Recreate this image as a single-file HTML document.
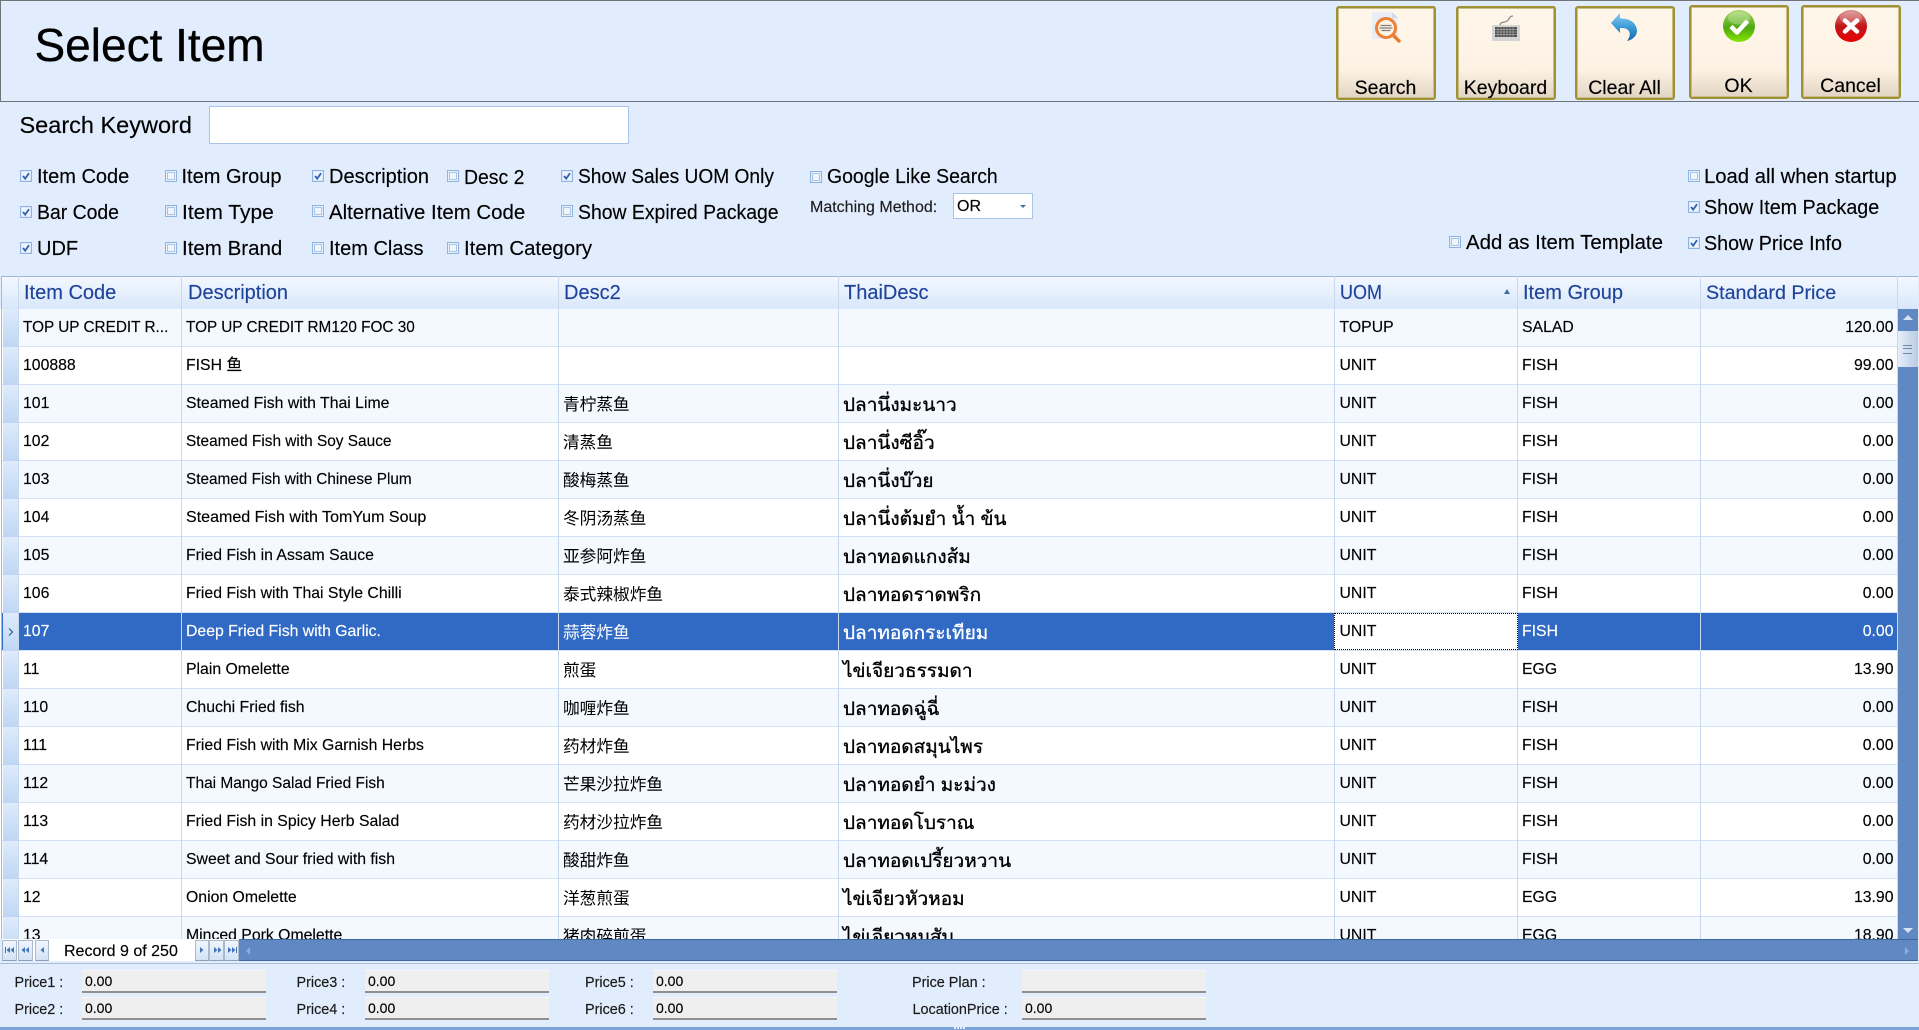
<!DOCTYPE html>
<html lang="en"><head><meta charset="utf-8"><title>Select Item</title>
<style>
html,body{margin:0;padding:0;width:1919px;height:1030px;overflow:hidden;background:#e1edfd}
body{position:relative;font-family:"Liberation Sans","Noto Sans CJK SC",sans-serif;color:#000;-webkit-text-stroke:.15px currentColor}
.t{position:absolute;white-space:nowrap;transform-origin:0 50%}
.l{font-size:20px;line-height:24px}
.ck{position:absolute;width:12px;height:12px}
.btn{position:absolute;box-sizing:border-box;width:100px;border:2px solid #a09234;border-radius:3px;background:linear-gradient(#fff6ea 0,#fdf2e4 68%,#e2d5c3 100%);box-shadow:0 0 0 1px #c8c08a inset}
.btn span{position:absolute;left:-1px;right:0;text-align:center;font-size:19.5px;line-height:24px;bottom:-2px}
.abs{position:absolute}
.hd{position:absolute;left:2px;top:276px;width:1916px;height:32px;background:linear-gradient(#f3f8ff,#d8e7fa);border-top:1px solid #9db5d3;border-bottom:1px solid #a5c0e2;box-sizing:content-box}
.hd b{position:absolute;top:0;font-weight:normal;font-size:20px;line-height:32px;color:#1f439b;white-space:nowrap;transform-origin:0 50%}
.vl{position:absolute;width:1px;top:276px;height:663px;background:#c8d9ee;z-index:3}
.body{position:absolute;left:0;top:309px;width:1898px;height:630px;overflow:hidden;background:#fff}
.r{position:absolute;left:2px;width:1896px;height:37px;border-bottom:1px solid #d2e1f3;background:#fff;font-size:15.8px;line-height:37px}
.r.o{background:#f4f8ff}
.r i{position:absolute;font-style:normal;white-space:nowrap;top:0}
.r:before{content:"";position:absolute;left:1px;top:0;width:15px;height:38px;background:linear-gradient(#dfebfb,#bed6f4)}
.a{left:21px}.b{left:184px}.r i.c{left:561px;font-size:16.7px;top:1px;-webkit-text-stroke:0}.r i.d{left:841px;font-size:19px;top:1.500px;-webkit-text-stroke:.35px currentColor}.e{left:1337.5px}.f{left:1520px}.g{right:4.500px}
.r.s{background:#316ac5;color:#fff;border-bottom:1px solid #d2e1f3}
.uc{position:absolute;left:1332px;top:0;width:182px;height:35px;background:#fff;border:1px dotted #000;color:#000;z-index:5}
.fld{position:absolute;box-sizing:border-box;width:184px;height:23px;background:#efefef;border-bottom:2px solid #8f8f8f;border-top:1px solid #f7f7f7;font-size:14px;line-height:20px;padding-left:3px}
.pl{position:absolute;font-size:14.4px;line-height:18px;color:#1a1a1a;white-space:nowrap}
.nb{position:absolute;top:940px;height:21px;box-sizing:border-box;border:1px solid #aab9cc;border-bottom:1px solid #8c9fb8;background:linear-gradient(#f0f6ff,#d3e2f6)}
</style></head><body>

<svg width="0" height="0" style="position:absolute"><defs>
<symbol id="u" viewBox="0 0 12 12"><rect x=".5" y=".5" width="11" height="11" fill="#e6effc" stroke="#8fb4e3"/><rect x="2.500" y="2.500" width="7" height="7" fill="#eef4fc" stroke="#aec5e2"/></symbol>
<symbol id="k" viewBox="0 0 12 12"><rect x=".5" y=".5" width="11" height="11" fill="#dce8f8" stroke="#8fb4e3"/><rect x="2" y="2" width="8" height="8" fill="#eef4fb"/><path d="M3 6l2.200 2.600L9 3.200" fill="none" stroke="#2f63b0" stroke-width="1.800"/></symbol>
<linearGradient id="gG" x1="0" y1="0" x2="0" y2="1"><stop offset="0" stop-color="#a9d96a"/><stop offset=".55" stop-color="#4fa810"/><stop offset="1" stop-color="#86e400"/></linearGradient>
<linearGradient id="gR" x1="0" y1="0" x2="0" y2="1"><stop offset="0" stop-color="#d88f8f"/><stop offset=".5" stop-color="#c01818"/><stop offset="1" stop-color="#e80000"/></linearGradient>
<linearGradient id="gB" x1="0" y1="0" x2="0" y2="1"><stop offset="0" stop-color="#8ccdf0"/><stop offset=".5" stop-color="#3b9bd8"/><stop offset="1" stop-color="#1668a8"/></linearGradient>
</defs></svg>

<!-- header -->
<div class="abs" style="left:0;top:0;width:1919px;height:102px;box-sizing:border-box;border-top:1px solid #6f7479;border-left:1px solid #6f7479;border-bottom:1px solid #6f7479"></div>
<div class="t" style="left:34.500px;top:17px;font-size:46px;line-height:56px;-webkit-text-stroke:.3px #000">Select Item</div>

<div class="btn" style="left:1336px;top:6px;height:94px"><span>Search</span></div>
<div class="btn" style="left:1456px;top:6px;height:94px"><span>Keyboard</span></div>
<div class="btn" style="left:1575px;top:6px;height:94px"><span>Clear All</span></div>
<div class="btn" style="left:1689px;top:5px;height:94px"><span style="bottom:-1px">OK</span></div>
<div class="btn" style="left:1801px;top:5px;height:94px"><span style="bottom:-1px">Cancel</span></div>

<svg class="abs" style="left:1372px;top:12px" width="30" height="31" viewBox="0 0 30 31">
<path d="M0 0H20L26 6V27H0Z" fill="#e9edf5"/><path d="M20 0V6H26Z" fill="#d3d9e5"/>
<path d="M21 23L27 29" stroke="#ee7a28" stroke-width="3.400" stroke-linecap="round"/>
<circle cx="14" cy="16" r="9.500" fill="#fff3e4" stroke="#ee8136" stroke-width="3"/>
<path d="M8.500 13.500h11M7.500 16h13M9.500 18.500h9" stroke="#7d7d7d" stroke-width="1.300"/></svg>

<svg class="abs" style="left:1492px;top:15px" width="28" height="27" viewBox="0 0 28 27">
<path d="M8 11C8 6 12 8 15 6S17 1 21 1" fill="none" stroke="#8b8b8b" stroke-width="1.300"/>
<rect x="0" y="10" width="28" height="16" rx="1" fill="#d4d4d4"/><rect x="3" y="12" width="22" height="10" fill="#4e4e4e"/>
<path d="M3 14.500h22M3 17h22M3 19.500h22" stroke="#a8a8a8" stroke-width=".7"/>
<path d="M6 12v10M9 12v10M12 12v10M15 12v10M18 12v10M21 12v10" stroke="#a8a8a8" stroke-width=".7"/></svg>

<svg class="abs" style="left:1611px;top:13px" width="27" height="29" viewBox="0 0 27 29">
<path d="M0 10L9 0V5.500C20 5 26 11 26 18C26 23 21 27 16 28C19 24 20 20 17 17C15 15 12 15 9 15V20Z" fill="url(#gB)"/></svg>

<svg class="abs" style="left:1723px;top:10px" width="32" height="32" viewBox="0 0 32 32">
<ellipse cx="16" cy="16" rx="16" ry="16" fill="url(#gG)"/><ellipse cx="16" cy="8" rx="11" ry="6.500" fill="#fff" opacity=".25"/>
<path d="M8 16.500l6 6L24.500 11" fill="none" stroke="#fff" stroke-width="4.500" stroke-linejoin="round"/></svg>

<svg class="abs" style="left:1835px;top:10px" width="32" height="32" viewBox="0 0 32 32">
<ellipse cx="16" cy="16" rx="16" ry="16" fill="url(#gR)"/><ellipse cx="16" cy="8" rx="11" ry="6.500" fill="#fff" opacity=".2"/>
<path d="M10 10.500l12 11M22 10.500l-12 11" fill="none" stroke="#fff" stroke-width="4.500" stroke-linecap="round"/></svg>

<!-- search row -->
<div class="t" style="left:19.500px;top:110px;font-size:23.500px;line-height:30px">Search Keyword</div>
<div class="abs" style="left:209px;top:106px;width:420px;height:38px;box-sizing:border-box;background:#fff;border:1px solid #a9c4e6"></div>

<!-- checkboxes -->
<svg class="ck" style="left:20px;top:170px"><use href="#k"/></svg><div class="t l" style="left:37px;top:164.500px">Item Code</div>
<svg class="ck" style="left:165px;top:170px"><use href="#u"/></svg><div class="t l" style="left:181.500px;top:164.500px">Item Group</div>
<svg class="ck" style="left:312px;top:170px"><use href="#k"/></svg><div class="t l" style="left:329px;top:164.500px">Description</div>
<svg class="ck" style="left:447px;top:170px"><use href="#u"/></svg><div class="t l" style="left:464px;top:165.500px;transform:scaleX(.97)">Desc 2</div>
<svg class="ck" style="left:561px;top:170px"><use href="#k"/></svg><div class="t l" style="left:578px;top:164.500px;transform:scaleX(.958)">Show Sales UOM Only</div>
<svg class="ck" style="left:810px;top:171px"><use href="#u"/></svg><div class="t l" style="left:827px;top:165px;transform:scaleX(.972)">Google Like Search</div>

<svg class="ck" style="left:20px;top:206px"><use href="#k"/></svg><div class="t l" style="left:37px;top:201px;transform:scaleX(.97)">Bar Code</div>
<svg class="ck" style="left:165px;top:205px"><use href="#u"/></svg><div class="t l" style="left:181.500px;top:200.500px;transform:scaleX(1.05)">Item Type</div>
<svg class="ck" style="left:312px;top:205px"><use href="#u"/></svg><div class="t l" style="left:329px;top:200.500px;transform:scaleX(1.02)">Alternative Item Code</div>
<svg class="ck" style="left:561px;top:205px"><use href="#u"/></svg><div class="t l" style="left:578px;top:201px;transform:scaleX(.97)">Show Expired Package</div>

<svg class="ck" style="left:20px;top:242px"><use href="#k"/></svg><div class="t l" style="left:37px;top:237px">UDF</div>
<svg class="ck" style="left:165px;top:242px"><use href="#u"/></svg><div class="t l" style="left:181.500px;top:237px;transform:scaleX(1.025)">Item Brand</div>
<svg class="ck" style="left:312px;top:242px"><use href="#u"/></svg><div class="t l" style="left:329px;top:237px">Item Class</div>
<svg class="ck" style="left:447px;top:242px"><use href="#u"/></svg><div class="t l" style="left:464px;top:237px;transform:scaleX(1.02)">Item Category</div>

<div class="t" style="left:810px;top:197.500px;font-size:16px;line-height:20px;color:#1c1c1c">Matching Method:</div>
<div class="abs" style="left:953px;top:193px;width:80px;height:26px;box-sizing:border-box;background:#fff;border:1px solid #a9c4e6;font-size:16px;line-height:25px;padding-left:3px">OR</div>
<div class="abs" style="left:1020px;top:205px;width:0;height:0;border-left:3px solid transparent;border-right:3px solid transparent;border-top:3px solid #4a6f9f"></div>

<svg class="ck" style="left:1688px;top:170px"><use href="#u"/></svg><div class="t l" style="left:1704px;top:164.500px;transform:scaleX(1.013)">Load all when startup</div>
<svg class="ck" style="left:1688px;top:201px"><use href="#k"/></svg><div class="t l" style="left:1704px;top:195.500px;transform:scaleX(.985)">Show Item Package</div>
<svg class="ck" style="left:1688px;top:237px"><use href="#k"/></svg><div class="t l" style="left:1704px;top:231.500px;transform:scaleX(.985)">Show Price Info</div>
<svg class="ck" style="left:1449px;top:236px"><use href="#u"/></svg><div class="t l" style="left:1466px;top:230.500px;transform:scaleX(1.02)">Add as Item Template</div>

<!-- grid header -->
<div class="hd">
<b style="left:22px">Item Code</b><b style="left:186px">Description</b><b style="left:562px">Desc2</b><b style="left:842px">ThaiDesc</b><b style="left:1338px;transform:scaleX(.9)">UOM</b><b style="left:1521px">Item Group</b><b style="left:1704px;font-size:19.700px">Standard Price</b>
</div>
<div class="abs" style="left:1504px;top:289px;width:0;height:0;border-left:3px solid transparent;border-right:3px solid transparent;border-bottom:5px solid #3d6cab;z-index:4"></div>

<!-- grid body -->
<div class="body">
<div class="r o" style="top:0"><i class="a" style="transform:scaleX(.97);transform-origin:0 0">TOP UP CREDIT R...</i><i class="b" style="transform:scaleX(.97);transform-origin:0 0">TOP UP CREDIT RM120 FOC 30</i><i class="e">TOPUP</i><i class="f">SALAD</i><i class="g">120.00</i></div>
<div class="r" style="top:38px"><i class="a">100888</i><i class="b">FISH 鱼</i><i class="e">UNIT</i><i class="f">FISH</i><i class="g">99.00</i></div>
<div class="r o" style="top:76px"><i class="a">101</i><i class="b">Steamed Fish with Thai Lime</i><i class="c">青柠蒸鱼</i><i class="d">ปลานึ่งมะนาว</i><i class="e">UNIT</i><i class="f">FISH</i><i class="g">0.00</i></div>
<div class="r" style="top:114px"><i class="a">102</i><i class="b" style="transform:scaleX(.975);transform-origin:0 0">Steamed Fish with Soy Sauce</i><i class="c">清蒸鱼</i><i class="d">ปลานึ่งซีอิ๊ว</i><i class="e">UNIT</i><i class="f">FISH</i><i class="g">0.00</i></div>
<div class="r o" style="top:152px"><i class="a">103</i><i class="b" style="transform:scaleX(.97);transform-origin:0 0">Steamed Fish with Chinese Plum</i><i class="c">酸梅蒸鱼</i><i class="d">ปลานึ่งบ๊วย</i><i class="e">UNIT</i><i class="f">FISH</i><i class="g">0.00</i></div>
<div class="r" style="top:190px"><i class="a">104</i><i class="b" style="transform:scaleX(1.015);transform-origin:0 0">Steamed Fish with TomYum Soup</i><i class="c">冬阴汤蒸鱼</i><i class="d">ปลานึ่งต้มยำ น้ำ ข้น</i><i class="e">UNIT</i><i class="f">FISH</i><i class="g">0.00</i></div>
<div class="r o" style="top:228px"><i class="a">105</i><i class="b">Fried Fish in Assam Sauce</i><i class="c">亚参阿炸鱼</i><i class="d">ปลาทอดแกงส้ม</i><i class="e">UNIT</i><i class="f">FISH</i><i class="g">0.00</i></div>
<div class="r" style="top:266px"><i class="a">106</i><i class="b">Fried Fish with Thai Style Chilli</i><i class="c">泰式辣椒炸鱼</i><i class="d">ปลาทอดราดพริก</i><i class="e">UNIT</i><i class="f">FISH</i><i class="g">0.00</i></div>
<div class="r s" style="top:304px"><i class="a">107</i><i class="b">Deep Fried Fish with Garlic.</i><i class="c">蒜蓉炸鱼</i><i class="d">ปลาทอดกระเทียม</i><div class="uc"><i style="left:4.500px;line-height:35px">UNIT</i></div><i class="f">FISH</i><i class="g">0.00</i></div>
<div class="r" style="top:342px"><i class="a">11</i><i class="b">Plain Omelette</i><i class="c">煎蛋</i><i class="d">ไข่เจียวธรรมดา</i><i class="e">UNIT</i><i class="f">EGG</i><i class="g">13.90</i></div>
<div class="r o" style="top:380px"><i class="a">110</i><i class="b">Chuchi Fried fish</i><i class="c">咖喱炸鱼</i><i class="d">ปลาทอดฉู่ฉี่</i><i class="e">UNIT</i><i class="f">FISH</i><i class="g">0.00</i></div>
<div class="r" style="top:418px"><i class="a">111</i><i class="b">Fried Fish with Mix Garnish Herbs</i><i class="c">药材炸鱼</i><i class="d">ปลาทอดสมุนไพร</i><i class="e">UNIT</i><i class="f">FISH</i><i class="g">0.00</i></div>
<div class="r o" style="top:456px"><i class="a">112</i><i class="b" style="transform:scaleX(.98);transform-origin:0 0">Thai Mango Salad Fried Fish</i><i class="c">芒果沙拉炸鱼</i><i class="d">ปลาทอดยำ มะม่วง</i><i class="e">UNIT</i><i class="f">FISH</i><i class="g">0.00</i></div>
<div class="r" style="top:494px"><i class="a">113</i><i class="b">Fried Fish in Spicy Herb Salad</i><i class="c">药材沙拉炸鱼</i><i class="d">ปลาทอดโบราณ</i><i class="e">UNIT</i><i class="f">FISH</i><i class="g">0.00</i></div>
<div class="r o" style="top:532px"><i class="a">114</i><i class="b">Sweet and Sour fried with fish</i><i class="c">酸甜炸鱼</i><i class="d">ปลาทอดเปรี้ยวหวาน</i><i class="e">UNIT</i><i class="f">FISH</i><i class="g">0.00</i></div>
<div class="r" style="top:570px"><i class="a">12</i><i class="b">Onion Omelette</i><i class="c">洋葱煎蛋</i><i class="d">ไข่เจียวหัวหอม</i><i class="e">UNIT</i><i class="f">EGG</i><i class="g">13.90</i></div>
<div class="r o" style="top:608px"><i class="a">13</i><i class="b">Minced Pork Omelette</i><i class="c">猪肉碎煎蛋</i><i class="d">ไข่เจียวหมูสับ</i><i class="e">UNIT</i><i class="f">EGG</i><i class="g">18.90</i></div>
</div>

<div class="vl" style="left:18px"></div><div class="vl" style="left:181px"></div><div class="vl" style="left:558px"></div><div class="vl" style="left:838px"></div><div class="vl" style="left:1334px"></div><div class="vl" style="left:1517px"></div><div class="vl" style="left:1700px"></div><div class="vl" style="left:1897px"></div>
<div class="abs" style="left:1px;top:276px;width:1px;height:663px;background:#a4bbd7"></div>

<!-- selected row arrow -->
<svg class="abs" style="left:8px;top:628px;z-index:4" width="6" height="8" viewBox="0 0 6 8"><path d="M1 .5L4.500 4L1 7.500" fill="none" stroke="#2f5d9b" stroke-width="1.200"/></svg>

<!-- vertical scrollbar -->
<div class="abs" style="left:1898px;top:309px;width:20px;height:630px;background:#6088c3;z-index:2"></div>
<div class="abs" style="left:1903px;top:315px;width:0;height:0;border-left:5px solid transparent;border-right:5px solid transparent;border-bottom:5px solid #d7e4f5;z-index:3"></div>
<div class="abs" style="left:1898px;top:331px;width:20px;height:36px;background:linear-gradient(90deg,#e6eef9,#b9cbe4);z-index:3"></div>
<div class="abs" style="left:1903px;top:345px;width:9px;height:7px;border-top:1px solid #6d87aa;border-bottom:1px solid #6d87aa;z-index:4"></div>
<div class="abs" style="left:1903px;top:348px;width:9px;height:1px;background:#6d87aa;z-index:4"></div>
<div class="abs" style="left:1903px;top:928px;width:0;height:0;border-left:5px solid transparent;border-right:5px solid transparent;border-top:5px solid #d7e4f5;z-index:3"></div>

<!-- navigator / hscroll -->
<div class="abs" style="left:239px;top:939px;width:1679px;height:22px;box-sizing:border-box;background:#6088c3;border-top:1px solid #3c689f;border-bottom:1px solid #3c689f;z-index:4"></div>
<div class="abs" style="left:246px;top:947px;width:0;height:0;border-top:4px solid transparent;border-bottom:4px solid transparent;border-right:4px solid #8fadd8;z-index:5"></div>
<div class="abs" style="left:1905px;top:947px;width:0;height:0;border-top:4px solid transparent;border-bottom:4px solid transparent;border-left:4px solid #8fadd8;z-index:5"></div>
<div class="abs" style="left:2px;top:939px;width:237px;height:22px;background:#fff;z-index:4"></div>
<div class="nb" style="left:2px;width:15px;z-index:5"></div><div class="nb" style="left:18px;width:15px;z-index:5"></div><div class="nb" style="left:35px;width:14px;z-index:5"></div>
<div class="nb" style="left:195px;width:14px;z-index:5"></div><div class="nb" style="left:209px;width:15px;z-index:5"></div><div class="nb" style="left:224px;width:15px;z-index:5"></div>
<svg class="abs" style="left:0;top:939px;z-index:6" width="240" height="22" viewBox="0 0 240 22" fill="#4174b8">
<path d="M5 8h1v6H5zM10 8v6L6.500 11zM14 8v6L10.500 11z"/><path d="M25 8v6L21.500 11zM29 8v6L25.500 11z"/><path d="M44 8v6L40.500 11z"/>
<path d="M200 8v6L203.500 11z"/><path d="M214 8v6L217.500 11zM218 8v6L221.500 11z"/><path d="M228 8v6L231.500 11zM232 8v6L235.500 11zM236 8h1v6h-1z"/></svg>
<div class="t" style="left:64px;top:942px;font-size:16px;line-height:20px;z-index:6">Record 9 of 250</div>

<!-- footer -->
<div class="abs" style="left:0;top:963px;width:1919px;height:1px;background:#a9bfd9"></div>

<div class="pl" style="left:14.500px;top:974px">Price1 :</div><div class="fld" style="left:82px;top:970px">0.00</div>
<div class="pl" style="left:14.500px;top:1001px">Price2 :</div><div class="fld" style="left:82px;top:997px;line-height:21px">0.00</div>
<div class="pl" style="left:296.500px;top:974px">Price3 :</div><div class="fld" style="left:365px;top:970px">0.00</div>
<div class="pl" style="left:296.500px;top:1001px">Price4 :</div><div class="fld" style="left:365px;top:997px;line-height:21px">0.00</div>
<div class="pl" style="left:585px;top:974px">Price5 :</div><div class="fld" style="left:653px;top:970px">0.00</div>
<div class="pl" style="left:585px;top:1001px">Price6 :</div><div class="fld" style="left:653px;top:997px;line-height:21px">0.00</div>
<div class="pl" style="left:912px;top:974px">Price Plan :</div><div class="fld" style="left:1022px;top:970px"></div>
<div class="pl" style="left:912.500px;top:1001px">LocationPrice :</div><div class="fld" style="left:1022px;top:997px;line-height:21px">0.00</div>

<div class="abs" style="left:0;top:1027px;width:1919px;height:3px;background:#7ca3d9"></div>
<div class="abs" style="left:954px;top:1027px;width:11px;height:2px;background:repeating-linear-gradient(90deg,#e6effb 0 2px,transparent 2px 3px)"></div>
</body></html>
